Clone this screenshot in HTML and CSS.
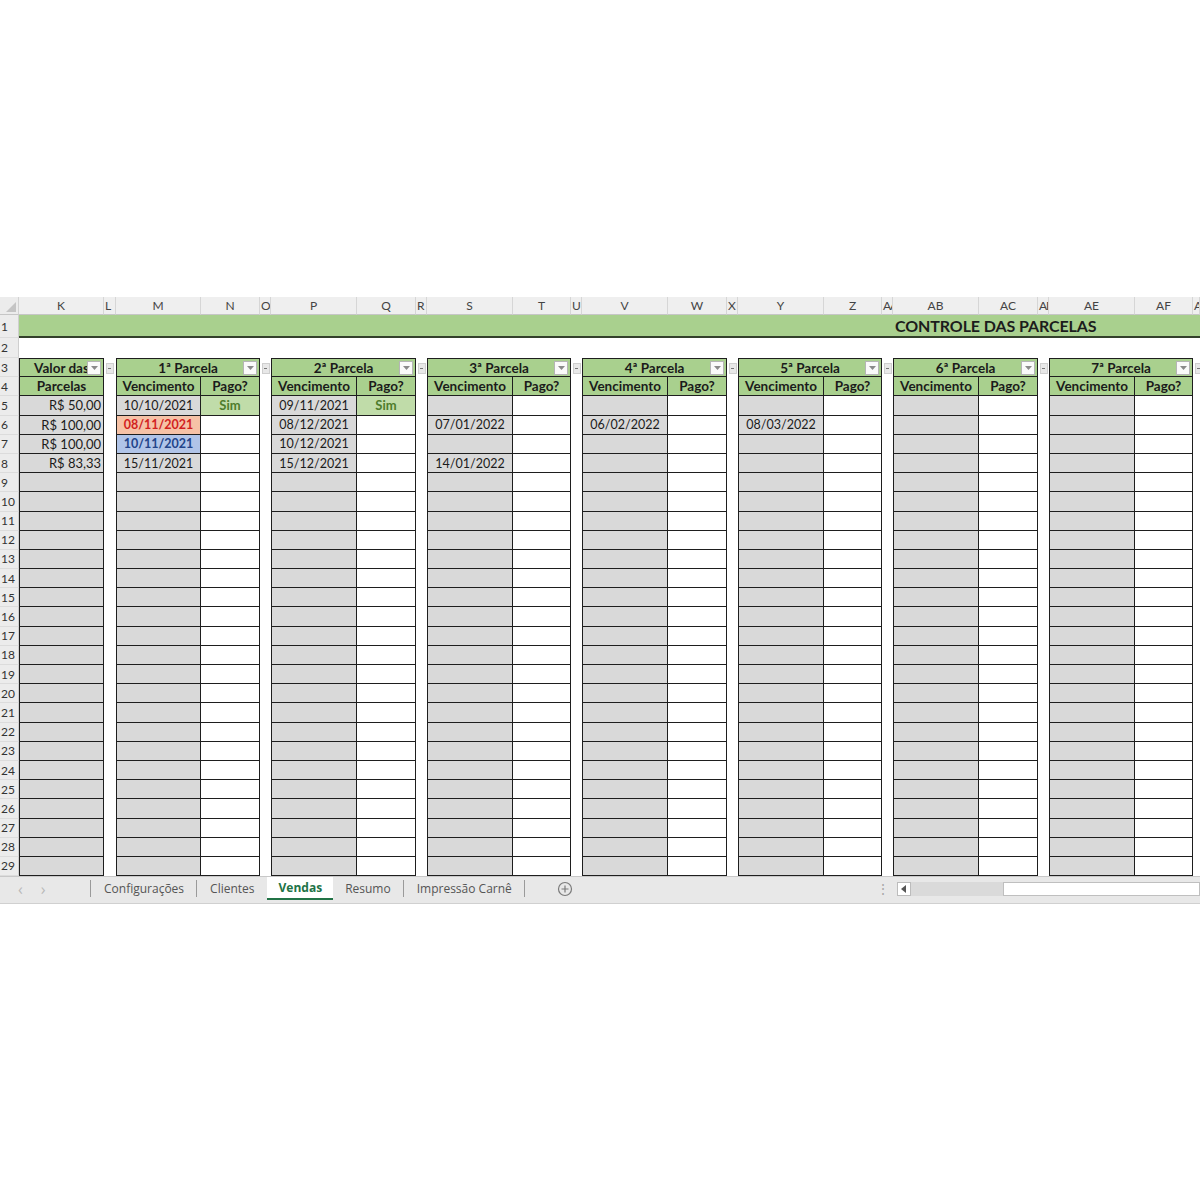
FILE: index.html
```html
<!DOCTYPE html>
<html lang="pt-BR">
<head>
  <meta charset="UTF-8" />
  <title>Vendas - Controle das Parcelas</title>
  <link rel="stylesheet" href="styles.css">
</head>
<body>

<div class="frame">
  <div class="sheet" id="sheet"></div>

  <div class="tabbar">
    <div class="arrows"><span>&#8249;</span><span>&#8250;</span></div>
    <div class="tab">Configurações</div>
    <div class="tab">Clientes</div>
    <div class="tab active">Vendas</div>
    <div class="tab">Resumo</div>
    <div class="tab">Impressão Carnê</div>
    <div class="addtab">
      <svg width="16" height="16" viewBox="0 0 16 16"><circle cx="8" cy="8" r="6.5" fill="none" stroke="#7a7a7a" stroke-width="1.2"/><path d="M8 4.5v7M4.5 8h7" stroke="#7a7a7a" stroke-width="1.2"/></svg>
    </div>
    <div class="scrollarea">
      <span class="dots">&#8942;</span>
      <div class="hscroll">
        <div class="sbtn"><svg width="6" height="8" viewBox="0 0 6 8"><path d="M5 0v8L0 4z" fill="#555"/></svg></div>
        <div class="thumb"></div>
        <div class="track"></div>
      </div>
    </div>
  </div>
</div>

<script>
  const letters = ["K","L","M","N","O","P","Q","R","S","T","U","V","W","X","Y","Z","AA","AB","AC","AD","AE","AF","AG"];
  const narrow = ["L","O","R","U","X","AA","AD","AG"];

  // values per row (5..8) for each parcela: [vencimento, pago, style]
  const valores = ["R$ 50,00", "R$ 100,00", "R$ 100,00", "R$ 83,33"];
  const parcelas = [
    [["10/10/2021","Sim"], ["08/11/2021","","late"], ["10/11/2021","","soon"], ["15/11/2021",""]],
    [["09/11/2021","Sim"], ["08/12/2021",""], ["10/12/2021",""], ["15/12/2021",""]],
    [["",""], ["07/01/2022",""], ["",""], ["14/01/2022",""]],
    [["",""], ["06/02/2022",""]],
    [["",""], ["08/03/2022",""]],
    [], []
  ];

  const sheet = document.getElementById("sheet");

  function cell(cls, text, col, row, span) {
    const d = document.createElement("div");
    d.className = cls;
    if (text) d.textContent = text;
    d.style.gridColumn = span ? `${col} / span ${span}` : col;
    d.style.gridRow = row;
    sheet.appendChild(d);
    return d;
  }

  function filterBtn(parent) {
    parent.insertAdjacentHTML("beforeend",
      '<span class="filter"><svg width="7" height="4" viewBox="0 0 7 4"><path d="M0 0h7L3.5 4z" fill="#8a8a8a"/></svg></span>');
  }

  // header row + row numbers
  cell("corner", "", 1, 1);
  letters.forEach((l, i) => cell(narrow.includes(l) ? "colhead narrow" : "colhead", l, i + 2, 1));
  for (let r = 1; r <= 29; r++) cell("rowhead", String(r), 1, r + 1);

  // row 1: title band
  cell("band", "", 2, 2, 17);
  cell("band title", "CONTROLE DAS PARCELAS", 19, 2, 6);

  // K column: Valor das Parcelas
  const k3 = cell("c hd first top", "Valor das", 2, 4);
  filterBtn(k3);
  cell("c hd first", "Parcelas", 2, 5);
  for (let r = 5; r <= 29; r++) cell("c grey first num", valores[r - 5] || "", 2, r + 1);

  // spacer dropdowns
  narrow.forEach(l => {
    cell("spacer", "", letters.indexOf(l) + 2, 4).innerHTML = '<span class="mini"></span>';
  });

  // parcelas tables
  parcelas.forEach((rows, g) => {
    const col = 4 + g * 3;
    const h = cell("c hd first top", `${g + 1}ª Parcela`, col, 4, 2);
    filterBtn(h);
    cell("c hd first", "Vencimento", col, 5);
    cell("c hd", "Pago?", col + 1, 5);
    for (let r = 5; r <= 29; r++) {
      const v = rows[r - 5] || ["", ""];
      cell("c grey first" + (v[2] ? " " + v[2] : ""), v[0], col, r + 1);
      cell(v[1] ? "c ok" : "c", v[1], col + 1, r + 1);
    }
  });
</script>

</body>
</html>
```

FILE: styles.css
```css
body { margin: 0; background: #fff; font-family: Lato, "Open Sans", sans-serif; color: #1b1b1b; }

.frame { padding-top: 297px; }

.sheet {
  display: grid;
  grid-template-columns: 19px 85px 12px 85px 59px 11px 86px 59px 11px 86px 58px 11px 86px 59px 11px 86px 58px 11px 86px 59px 11px 86px 58px 1fr;
  grid-template-rows: 18px 23px 20px repeat(27, 19.2px);
  overflow: hidden;
}
.sheet > div { box-sizing: border-box; position: relative; white-space: nowrap; overflow: hidden; }

.corner { background: #ececec; border-right: 1px solid #d2d2d2; border-bottom: 1px solid #c6c6c6; }
.corner::after {
  content: ""; position: absolute; right: 2px; bottom: 2px;
  border-left: 10px solid transparent; border-bottom: 10px solid #c4c4c4;
}
.colhead {
  background: #efefef; color: #444; font-size: 12px; text-align: center; line-height: 17px;
  border-right: 1px solid #d6d6d6; border-bottom: 1px solid #c6c6c6;
}
.colhead.narrow { text-align: left; padding-left: 1px; letter-spacing: -1px; }
.rowhead {
  background: #ececec; color: #333; font-size: 12px; padding-left: 1px;
  display: flex; align-items: center;
  border-right: 1px solid #cfcfcf; border-bottom: 1px solid #dcdcdc;
}

.band { background: #a9d08e; border-bottom: 2px solid #33402b; }
.band.title { font-weight: bold; font-size: 16px; padding-left: 2px; line-height: 22px; color: #1c1c1c; letter-spacing: -0.1px; }

.c {
  font-size: 12.5px; display: flex; align-items: center; justify-content: center;
  border-right: 1px solid #1e1e1e; border-bottom: 1px solid #1e1e1e; background: #fff;
}
.c.first { border-left: 1px solid #1e1e1e; }
.c.top { border-top: 1px solid #1e1e1e; }
.c.hd { background: #a9d08e; font-weight: bold; font-size: 13.5px; }
.c.grey { background: #d9d9d9; }
.c.num { justify-content: flex-end; padding-right: 2px; font-size: 13px; }
.c.ok { background: #c0dca9; color: #4e7d2c; font-weight: bold; font-size: 13px; }
.c.late { background: #f6c2a6; color: #d21f1f; font-weight: bold; }
.c.soon { background: #b0c4e8; color: #23448a; font-weight: bold; }

.filter {
  position: absolute; right: 2px; top: 2px; width: 12px; height: 12px;
  background: #fafafa; border: 1px solid #b5b5b5;
  display: flex; align-items: center; justify-content: center;
}
.spacer { background: #fff; }
.mini {
  position: absolute; left: 2px; top: 5px; width: 6px; height: 9px;
  background: #e8e8e8; border: 1px solid #cfcfcf;
}
.mini::after { content: ""; position: absolute; left: 1px; top: 4px; width: 3px; height: 1px; background: #777; }

.tabbar {
  display: flex; align-items: stretch; height: 23px; padding-bottom: 3px;
  background: #e8e8e8; border-top: 1px solid #c8c8c8; border-bottom: 1px solid #d0d0d0;
  font-family: "Open Sans", sans-serif; font-size: 12px; color: #555;
}
.arrows { width: 90px; display: flex; gap: 18px; padding-left: 18px; align-items: center; color: #b9b9b9; font-size: 16px; box-sizing: border-box; }
.tab { padding: 0 12px 0 13px; display: flex; align-items: center; border-left: 1px solid #9a9a9a; margin: 3px 0; }
.tab.active {
  background: #fff; color: #217346; font-weight: bold; margin: 0;
  border-left: none; border-bottom: 2px solid #217346; padding: 0 11px 0 12px;
}
.tab.active + .tab { border-left: none; padding-left: 12px; }
.addtab { border-left: 1px solid #9a9a9a; margin: 3px 0; padding-left: 32px; display: flex; align-items: center; }
.scrollarea { margin-left: auto; width: 324px; display: flex; align-items: center; }
.dots { color: #a9a9a9; font-size: 14px; width: 21px; }
.hscroll { flex: 1; display: flex; height: 14px; }
.sbtn { width: 12px; background: #fff; border: 1px solid #bcbcbc; display: flex; align-items: center; justify-content: center; }
.thumb { width: 92px; background: #dadada; }
.track { flex: 1; background: #fff; border: 1px solid #bfbfbf; }
```
